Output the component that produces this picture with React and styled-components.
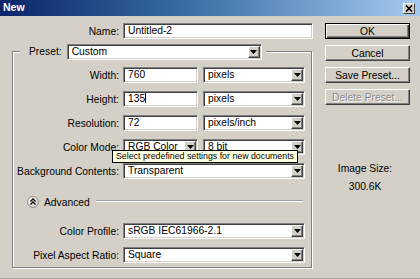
import React from 'react';
import styled, { createGlobalStyle } from 'styled-components';

const GlobalStyle = createGlobalStyle`
  html, body { margin: 0; padding: 0; background: #d4d0c8; }
  body { font-family: "Liberation Sans", Arial, sans-serif; font-size: 10px; color: #000; }
  * { box-sizing: border-box; }
`;

const Dialog = styled.div`
  position: relative;
  width: 420px;
  height: 279px;
  background: #d4d0c8;
  overflow: hidden;
  border-bottom: 1px solid #a9a59d;
`;

const TitleBar = styled.div`
  height: 16px;
  display: flex;
  align-items: flex-start;
  justify-content: space-between;
  padding: 2px 5px 0 3px;
  background: linear-gradient(to right, #0a246a 0%, #3a6ea5 45%, #a6caf0 100%);
`;

const Title = styled.span`
  color: #fff;
  font-weight: bold;
  font-size: 10.5px;
  line-height: 10px;
`;

const CloseBox = styled.div`
  width: 12px;
  height: 11px;
  margin-top: 1px;
  display: flex;
  align-items: center;
  justify-content: center;
  background: #d4d0c8;
  border: 1px solid;
  border-color: #fff #404040 #404040 #fff;
`;

const Body = styled.div`
  display: flex;
  padding-top: 7px;
`;

const Main = styled.div`
  width: 313px;
  display: flex;
  flex-direction: column;
`;

const Row = styled.div`
  display: grid;
  grid-template-columns: ${(p) => p.$label}px 1fr;
  column-gap: 4px;
  align-items: center;
  height: 16px;
`;

const Label = styled.label`
  text-align: right;
  white-space: nowrap;
  font-size: 10.3px;
`;

const Fields = styled.div`
  display: flex;
  gap: 5px;
  height: 16px;
`;

const Sunken = styled.div`
  height: 16px;
  width: ${(p) => p.$w}px;
  display: flex;
  align-items: stretch;
  background: #fff;
  border: 1px solid;
  border-color: #808080 #fff #fff #808080;
  box-shadow: inset 1px 1px 0 #404040, inset -1px -1px 0 #d4d0c8;
  padding: 1px;
`;

const Value = styled.span`
  flex: 1;
  padding-left: 3px;
  line-height: 12px;
  font-size: 10.3px;
  white-space: nowrap;
  overflow: hidden;
`;

const Caret = styled.span`
  display: inline-block;
  width: 1px;
  height: 10px;
  background: #000;
  vertical-align: -1px;
`;

const ArrowButton = styled.span`
  width: 12px;
  display: flex;
  align-items: center;
  justify-content: center;
  background: #d4d0c8;
  border: 1px solid;
  border-color: #fff #404040 #404040 #fff;
  box-shadow: inset -1px -1px 0 #808080;
`;

const Group = styled.fieldset`
  margin: 4px 0 0 12px;
  width: 300px;
  padding: 7px 0 4px 0;
  border: 1px solid #808080;
  box-shadow: 1px 1px 0 #fff, inset 1px 1px 0 #fff;
  min-inline-size: 0;
`;

const Legend = styled.legend`
  margin-left: 7px;
  padding: 0 4px 0 9px;
  background: #d4d0c8;
`;

const LegendInner = styled.div`
  display: flex;
  align-items: center;
  gap: 5px;
  height: 17px;
`;

const Rows = styled.div`
  display: flex;
  flex-direction: column;
  gap: 8px;
`;

const Advanced = styled.div`
  display: flex;
  align-items: center;
  height: 12px;
  margin: 17px 0 15px 14px;
  gap: 5px;
`;

const AdvancedText = styled.span`
  font-size: 10.3px;
`;

const Etch = styled.div`
  flex: 0 0 207px;
  margin-left: 1px;
  height: 2px;
  border-top: 1px solid #a0a0a0;
  border-bottom: 1px solid #fff;
  margin-top: -3px;
`;

const Side = styled.div`
  margin-left: 12px;
  width: 85px;
  display: flex;
  flex-direction: column;
  gap: 6px;
`;

const Button = styled.div`
  height: 16px;
  display: flex;
  align-items: center;
  justify-content: center;
  font-size: 10.3px;
  border: 1px solid;
  border-color: ${(p) => (p.$default ? '#000' : '#fff #404040 #404040 #fff')};
  box-shadow: ${(p) =>
    p.$default
      ? 'inset 1px 1px 0 #fff, inset -1px -1px 0 #404040, inset -2px -2px 0 #808080'
      : 'inset -1px -1px 0 #808080'};
  color: ${(p) => (p.$disabled ? '#8a8a8a' : '#000')};
  text-shadow: ${(p) => (p.$disabled ? '1px 1px 0 #fff' : 'none')};
`;

const SizeInfo = styled.div`
  margin-top: 52px;
  display: flex;
  flex-direction: column;
  align-items: center;
  gap: 7px;
  font-size: 10.3px;
  padding-right: 5px;
`;

const Tooltip = styled.div`
  position: absolute;
  left: 112px;
  top: 150px;
  height: 13px;
  padding: 0 3px;
  background: #ffffe1;
  border: 1px solid #000;
  font-size: 8.8px;
  line-height: 11px;
  white-space: nowrap;
`;

const DownArrow = () => (
  <svg width="7" height="4" viewBox="0 0 7 4">
    <path d="M0 0h7L3.5 4z" fill="#000" />
  </svg>
);

const Select = ({ w, children }) => (
  <Sunken $w={w}>
    <Value>{children}</Value>
    <ArrowButton>
      <DownArrow />
    </ArrowButton>
  </Sunken>
);

const Input = ({ w, children }) => (
  <Sunken $w={w}>
    <Value>{children}</Value>
  </Sunken>
);

const CollapseIcon = () => (
  <svg width="12" height="12" viewBox="0 0 12 12">
    <defs>
      <radialGradient id="adv" cx="0.4" cy="0.35" r="0.7">
        <stop offset="0" stopColor="#ffffff" />
        <stop offset="1" stopColor="#c8c6c0" />
      </radialGradient>
    </defs>
    <circle cx="6" cy="6" r="5.5" fill="url(#adv)" stroke="#9a9890" />
    <path d="M3.5 5.5 6 3 8.5 5.5M3.5 8.5 6 6 8.5 8.5" fill="none" stroke="#000" strokeWidth="1.3" />
  </svg>
);

const App = () => {
  return (
    <>
      <GlobalStyle />
      <Dialog>
        <TitleBar>
          <Title>New</Title>
          <CloseBox>
            <svg width="8" height="7" viewBox="0 0 8 7">
              <path d="M1 0.5 7 6.5M7 0.5 1 6.5" stroke="#000" strokeWidth="1.6" />
            </svg>
          </CloseBox>
        </TitleBar>
        <Body>
          <Main>
            <Row $label={119}>
              <Label>Name:</Label>
              <Input w={190}>Untitled-2</Input>
            </Row>
            <Group>
              <Legend>
                <LegendInner>
                  <Label>Preset:</Label>
                  <Select w={195}>Custom</Select>
                </LegendInner>
              </Legend>
              <Rows>
                <Row $label={106}>
                  <Label>Width:</Label>
                  <Fields>
                    <Input w={75}>760</Input>
                    <Select w={102}>pixels</Select>
                  </Fields>
                </Row>
                <Row $label={106}>
                  <Label>Height:</Label>
                  <Fields>
                    <Input w={75}>
                      135<Caret />
                    </Input>
                    <Select w={102}>pixels</Select>
                  </Fields>
                </Row>
                <Row $label={106}>
                  <Label>Resolution:</Label>
                  <Fields>
                    <Input w={75}>72</Input>
                    <Select w={102}>pixels/inch</Select>
                  </Fields>
                </Row>
                <Row $label={106}>
                  <Label>Color Mode:</Label>
                  <Fields>
                    <Select w={75}>RGB Color</Select>
                    <Select w={102}>8 bit</Select>
                  </Fields>
                </Row>
                <Row $label={106}>
                  <Label>Background Contents:</Label>
                  <Fields>
                    <Select w={182}>Transparent</Select>
                  </Fields>
                </Row>
              </Rows>
              <Advanced>
                <CollapseIcon />
                <AdvancedText>Advanced</AdvancedText>
                <Etch />
              </Advanced>
              <Rows>
                <Row $label={106}>
                  <Label>Color Profile:</Label>
                  <Fields>
                    <Select w={182}>sRGB IEC61966-2.1</Select>
                  </Fields>
                </Row>
                <Row $label={106}>
                  <Label>Pixel Aspect Ratio:</Label>
                  <Fields>
                    <Select w={182}>Square</Select>
                  </Fields>
                </Row>
              </Rows>
            </Group>
          </Main>
          <Side>
            <Button $default>OK</Button>
            <Button>Cancel</Button>
            <Button>Save Preset...</Button>
            <Button $disabled>Delete Preset...</Button>
            <SizeInfo>
              <span>Image Size:</span>
              <span>300.6K</span>
            </SizeInfo>
          </Side>
        </Body>
        <Tooltip>Select predefined settings for new documents</Tooltip>
      </Dialog>
    </>
  );
};

export default App;
